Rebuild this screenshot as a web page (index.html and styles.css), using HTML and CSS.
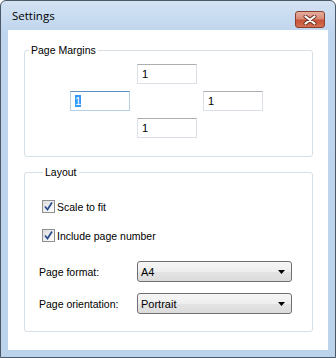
FILE: index.html
```html
<!DOCTYPE html>
<html lang="en">
  <head>
    <meta charset="UTF-8" />
    <title>Settings</title>
    <link rel="stylesheet" href="styles.css">
  </head>
  <body>
    <div class="window">
      <!-- title bar -->
      <div class="titlebar">
        <span class="title">Settings</span>
        <div class="close">
          <svg width="14" height="10" viewBox="0 0 14 10">
            <path d="M2.5 1.5 L11.5 8.5 M11.5 1.5 L2.5 8.5" stroke="#6b3026" stroke-width="4" stroke-linecap="round" />
            <path d="M2.5 1.5 L11.5 8.5 M11.5 1.5 L2.5 8.5" stroke="#ffffff" stroke-width="2.2" stroke-linecap="round" />
          </svg>
        </div>
      </div>

      <div class="client">
        <!-- Page Margins -->
        <fieldset class="group margins">
          <legend>Page Margins</legend>
          <div class="margin-grid">
            <div class="textbox top">1</div>
            <div class="textbox left focused"><span class="selected">1</span></div>
            <div class="textbox right">1</div>
            <div class="textbox bottom">1</div>
          </div>
        </fieldset>

        <!-- Layout -->
        <fieldset class="group layout">
          <legend>Layout</legend>
          <div class="check-row first">
            <span class="checkbox">
              <svg width="9" height="9" viewBox="0 0 9 9">
                <path d="M1 4.5 L3.5 7.5 L8 0.5" fill="none" stroke="#2d4d8e" stroke-width="1.8" />
              </svg>
            </span>
            <span>Scale to fit</span>
          </div>
          <div class="check-row">
            <span class="checkbox">
              <svg width="9" height="9" viewBox="0 0 9 9">
                <path d="M1 4.5 L3.5 7.5 L8 0.5" fill="none" stroke="#2d4d8e" stroke-width="1.8" />
              </svg>
            </span>
            <span>Include page number</span>
          </div>
          <div class="field-row first-select">
            <span class="label">Page format:</span>
            <div class="combo">
              <span>A4</span>
              <svg width="7" height="4" viewBox="0 0 7 4"><path d="M0 0 H7 L3.5 4 Z" fill="#000" /></svg>
            </div>
          </div>
          <div class="field-row">
            <span class="label">Page orientation:</span>
            <div class="combo">
              <span>Portrait</span>
              <svg width="7" height="4" viewBox="0 0 7 4"><path d="M0 0 H7 L3.5 4 Z" fill="#000" /></svg>
            </div>
          </div>
        </fieldset>
      </div>
    </div>
  </body>
</html>
```

FILE: styles.css
```css
body {
  margin: 0;
  font-family: "Liberation Sans", Arial, sans-serif;
  font-size: 10.5px;
  color: #000;
}

/* window frame */
.window {
  width: 336px;
  height: 358px;
  box-sizing: border-box;
  border: 1px solid #4a5868;
  border-radius: 6px 6px 0 0;
  background: linear-gradient(to bottom, #d2e2f3 0px, #c0d6ee 30px, #bcd3ec 100%);
  display: flex;
  flex-direction: column;
}

.titlebar {
  height: 29px;
  display: flex;
  align-items: flex-start;
  justify-content: space-between;
}

.title {
  font-family: "Open Sans", sans-serif;
  font-size: 11.5px;
  margin: 7px 0 0 11px;
}

.close {
  width: 30px;
  height: 17px;
  margin: 10px 10px 0 0;
  box-sizing: border-box;
  border: 1px solid #8a3e30;
  border-radius: 3px;
  background: linear-gradient(to bottom, #e6ad9e 0%, #d88b75 45%, #c7523a 55%, #d4704f 100%);
  display: flex;
  align-items: center;
  justify-content: center;
}

.client {
  margin: 0 7px 7px 7px;
  height: 320px;
  background: #fff;
  padding-top: 13px;
  box-sizing: border-box;
}

/* group boxes */
.group {
  margin: 0 15px 0 16px;
  border: 1px solid #d5dfe5;
  border-radius: 3px;
  padding: 0;
}

.group legend {
  margin-left: 4px;
  padding: 0 2px;
  line-height: 14px;
}

.margins {
  padding: 7px 0 18px 0;
}

.margin-grid {
  display: grid;
  grid-template-columns: 67px 66px 60px;
  grid-template-rows: 20px 20px 20px;
  row-gap: 7px;
  margin-left: 45px;
}

.textbox {
  width: 60px;
  box-sizing: border-box;
  border: 1px solid #dbdfe6;
  border-top-color: #abadb3;
  padding: 0 4px;
  line-height: 18px;
  font-size: 11px;
}

.textbox.top {
  grid-column: 2;
  grid-row: 1;
}

.textbox.left {
  grid-column: 1;
  grid-row: 2;
}

.textbox.right {
  grid-column: 3;
  grid-row: 2;
}

.textbox.bottom {
  grid-column: 2;
  grid-row: 3;
}

.textbox.focused {
  border-color: #b5cfe7;
  border-top-color: #5d8fc0;
}

.selected {
  background: #3399ff;
  color: #fff;
}

/* layout group */
.layout {
  margin-top: 8px;
  padding: 0 20px 17px 14px;
}

.check-row {
  display: flex;
  align-items: center;
  height: 13px;
  margin-top: 16px;
  padding-left: 3px;
}

.check-row.first {
  margin-top: 21px;
}

.checkbox {
  width: 13px;
  height: 13px;
  box-sizing: border-box;
  border: 1px solid #8e8f8f;
  background: linear-gradient(135deg, #dcdcdc 0%, #f5f5f5 70%, #ffffff 100%);
  display: flex;
  align-items: center;
  justify-content: center;
  margin-right: 2px;
}

.field-row {
  display: grid;
  grid-template-columns: 98px 155px;
  align-items: center;
  margin-top: 11px;
}

.field-row.first-select {
  margin-top: 19px;
}

.combo {
  height: 21px;
  box-sizing: border-box;
  border: 1px solid #707070;
  border-radius: 3px;
  background: linear-gradient(to bottom, #f6f6f6 0%, #eeeeee 50%, #e4e4e4 51%, #dcdcdc 100%);
  display: flex;
  align-items: center;
  justify-content: space-between;
  padding: 0 6px 0 3px;
  font-size: 11px;
}
```
